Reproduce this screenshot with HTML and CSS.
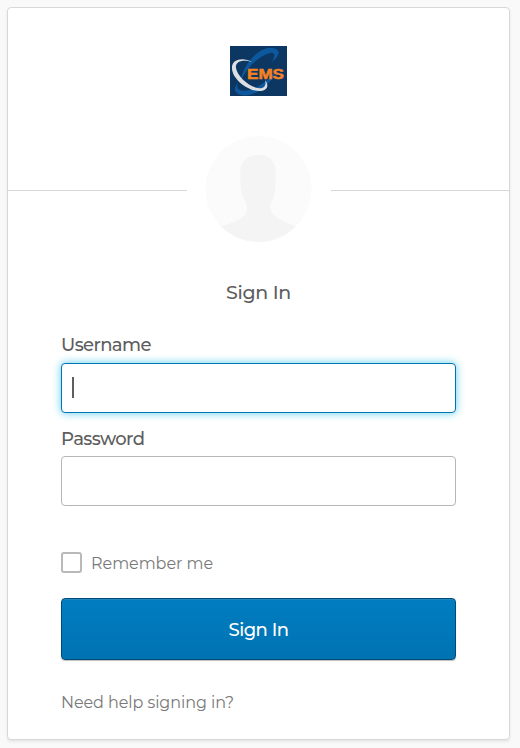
FILE: index.html
```html
<!DOCTYPE html>
<html lang="en">
<head>
  <meta charset="UTF-8">
  <title>Sign In</title>
  <meta name="viewport" content="width=device-width, initial-scale=1.0">
  <link rel="stylesheet" href="styles.css">
</head>
<body>
  <main class="card">
    <header class="header">
      <svg class="logo" viewBox="0 0 57 50" role="img" aria-label="EMS">
        <rect width="57" height="50" fill="#0b3762"/>
        <path d="M46 3C35-3 15 12 10 36C17 21 29 10 40 7C45 6 46 10 41 17C49 10 51 6 46 3Z" fill="#0d579d"/>
        <path d="M8 37C4 46 17 47 27 41C36 36 41 31 46 25C42 38 24 52 11 49C4 47 3 42 8 37Z" fill="#0d579d"/>
        <path d="M22 16C13 11 1 13 2 23C3 34 19 46 31 45C38 44 39 39 35 34C37 40 33 43 28 42C17 40 7 29 6 22C5 15 13 13 22 16Z" fill="#dedfe2"/>
        <text class="logo-text" x="17" y="33" textLength="37" lengthAdjust="spacingAndGlyphs">EMS</text>
      </svg>
      <div class="divider">
        <svg class="avatar" viewBox="0 0 107 107">
          <circle cx="53.5" cy="53.5" r="53.5" fill="#fbfbfb"/>
          <path d="M53 19C43 19 35 25 35 36C35 43 35 54 37 60C39 65 42 68 42 74C41 84 27 87 16 91.500A53.500 53.500 0 0 0 91 91.500C79 86 65 81 65 71C66 66 69 63 70 57C71 51 71 43 71 36C71 25 63 19 53 19Z" fill="#f4f4f4"/>
        </svg>
      </div>
    </header>
    <form class="form">
      <h2>Sign In</h2>

      <label class="field-label" for="username">Username</label>
      <div class="field">
        <input class="focused" type="text" id="username">
        <span class="caret"></span>
      </div>

      <label class="field-label" for="password">Password</label>
      <div class="field">
        <input type="password" id="password">
      </div>

      <div class="remember">
        <input type="checkbox" id="remember">
        <label for="remember">Remember me</label>
      </div>

      <button class="submit" type="button"><span>Sign In</span></button>
      <a class="help" href="#">Need help signing in?</a>
    </form>
  </main>
</body>
</html>
```
FILE: styles.css
```css
* {
  box-sizing: border-box;
}

body {
  font-family: 'Montserrat', 'Inter', sans-serif;
  background: #f9f9f9;
  color: #5e5e5e;
  margin: 0;
  padding: 7px;
}

.card {
  width: 503px;
  height: 733px;
  background: #fff;
  border: 1px solid #d8d8d8;
  border-radius: 4px;
  box-shadow: 0 2px 3px rgba(0,0,0,0.08);
}

.header {
  display: flex;
  flex-direction: column;
  align-items: center;
  padding-top: 38px;
}

.logo {
  display: block;
  width: 57px;
  height: 50px;
}

.logo-text {
  font-family: 'Liberation Sans', sans-serif;
  font-size: 14.5px;
  font-weight: 700;
  fill: #f5821f;
  stroke: #f5821f;
  stroke-width: 0.5px;
}

.divider {
  display: flex;
  align-items: center;
  width: 100%;
  height: 109px;
  margin-top: 40px;
}

.divider::before,
.divider::after {
  content: "";
  flex: 1;
  height: 1px;
  background: #d8d8d8;
}

.avatar {
  align-self: flex-start;
  width: 107px;
  height: 106px;
  margin: 0 19px 0 18px;
}

.form {
  padding: 0 53px;
}

h2 {
  margin: 36px 0 0;
  font-size: 19px;
  font-weight: 500;
  line-height: 24px;
  letter-spacing: -0.3px;
  text-align: center;
}

.field-label {
  display: block;
  margin-top: 29px;
  font-size: 18px;
  font-weight: 500;
  line-height: 22px;
  letter-spacing: -0.6px;
}

.field {
  position: relative;
  margin-top: 7px;
}

.field input {
  display: block;
  width: 395px;
  height: 50px;
  padding: 0 11px;
  border: 1px solid #b6b6b6;
  border-radius: 4px;
  background: #fff;
  font: inherit;
  font-size: 17px;
  outline: none;
}

.field .focused {
  border-color: #0074b3;
  box-shadow: 0 0 9px rgba(0,180,230,0.65);
}

.caret {
  position: absolute;
  left: 11px;
  top: 14px;
  width: 2px;
  height: 21px;
  background: #5e5e5e;
}

.field + .field-label {
  margin-top: 15px;
}

.field-label + .field:has(#password) {
  margin-top: 6px;
}

.remember {
  display: flex;
  align-items: center;
  gap: 9px;
  height: 22px;
  margin-top: 46px;
  font-size: 16px;
  letter-spacing: -0.05px;
  color: #7a7a7a;
}

.remember input {
  appearance: none;
  align-self: flex-start;
  width: 21px;
  height: 21px;
  margin: 0;
  border: 2px solid #b9b9b9;
  border-radius: 3px;
}

.submit {
  display: block;
  width: 395px;
  height: 62px;
  margin-top: 24px;
  padding: 2px 0 0;
  border: 1px solid #004b75;
  border-radius: 4px;
  background: linear-gradient(#007dc1, #0073b2);
  box-shadow: inset 0 1px 0 #1d87c0, 0 1px 1px rgba(0,0,0,0.25);
  color: #fff;
  font: inherit;
  font-size: 18px;
  font-weight: 500;
  letter-spacing: -0.5px;
}

.help {
  display: block;
  margin-top: 33px;
  font-size: 16px;
  line-height: 20px;
  letter-spacing: -0.08px;
  color: #7a7a7a;
  text-decoration: none;
}
```
